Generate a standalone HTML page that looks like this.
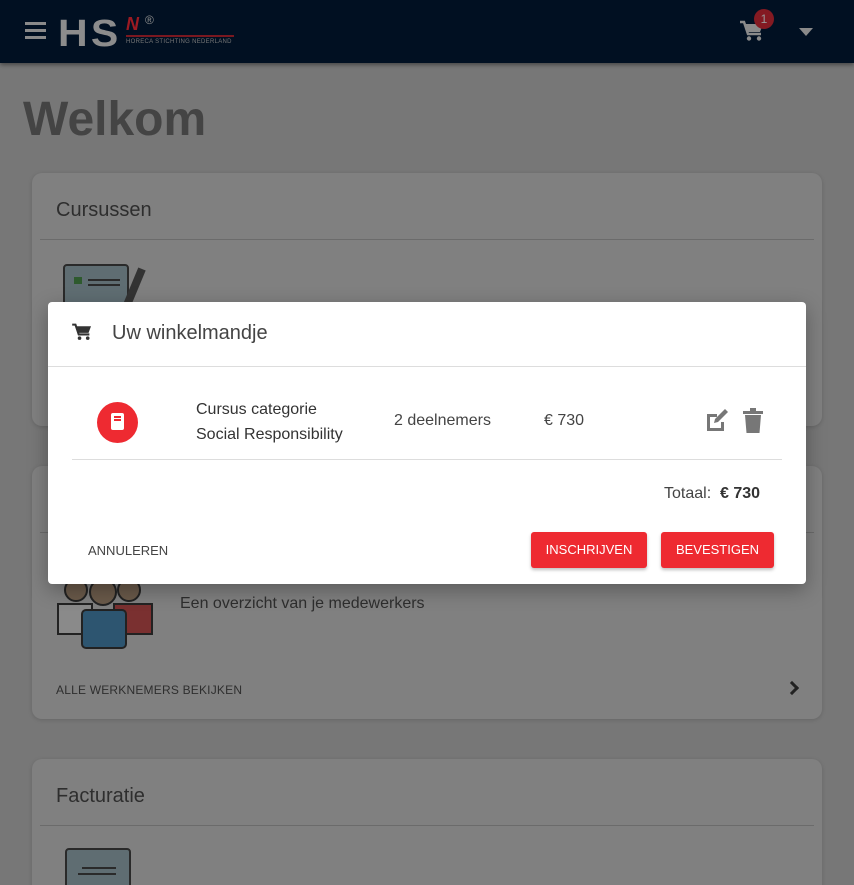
<!DOCTYPE html>
<html><head><meta charset="utf-8"><style>
*{box-sizing:border-box;margin:0;padding:0}
html,body{width:854px;height:885px;overflow:hidden}
body{background:#777;font-family:"Liberation Sans",sans-serif;position:relative;color:#333}
.hdr{position:absolute;left:0;top:0;width:854px;height:63px;background:#011022;box-shadow:0 2px 4px rgba(0,0,0,.4)}
.card{position:absolute;left:32px;width:790px;background:#808080;border-radius:10px;box-shadow:0 1px 4px rgba(0,0,0,.15)}
.card h2{font-weight:normal;font-size:20px;color:#2e2e2e;padding:26px 0 0 16px;height:67px;border-bottom:1px solid #6b6b6b;margin:0 8px}
.modal{position:absolute;left:48px;top:302px;width:758px;height:282px;background:#fff;border-radius:4px;box-shadow:0 6px 20px rgba(0,0,0,.3)}
.btn{position:absolute;top:230px;height:36px;background:#ee2a31;color:#fff;font-size:13px;border-radius:3px;text-align:center;line-height:36px;box-shadow:0 2px 3px rgba(0,0,0,.25)}
</style></head><body>
<div class="hdr">
 <div style="position:absolute;left:25px;top:22px;width:21px;height:3px;background:#8a8a8a;box-shadow:0 7px 0 #8a8a8a,0 14px 0 #8a8a8a"></div>
 <div style="position:absolute;left:58px;top:13px;font:bold 38px 'Liberation Sans';color:#8c8c8c;letter-spacing:3px;line-height:42px;transform:scaleX(1.08);transform-origin:left">HS</div>
 <div style="position:absolute;left:126px;top:14px;font:italic bold 18px 'Liberation Sans';color:#9c1a22">N</div>
 <div style="position:absolute;left:145px;top:13px;font:12px 'Liberation Sans';color:#8c8c8c">®</div>
 <div style="position:absolute;left:126px;top:35px;width:108px;height:2px;background:#7a1820"></div>
 <div style="position:absolute;left:126px;top:39px;font:6px 'Liberation Sans';color:#777;letter-spacing:.3px">HORECA STICHTING NEDERLAND</div>
 <svg style="position:absolute;left:740px;top:20px" width="24" height="22" viewBox="0 0 24 22"><path d="M0 2h4l4 12h13" fill="none" stroke="#8a8a8a" stroke-width="2.5"/><path d="M5 4h18l-3 8H8z" fill="#8a8a8a"/><circle cx="9" cy="18.5" r="2.2" fill="#8a8a8a"/><circle cx="19" cy="18.5" r="2.2" fill="#8a8a8a"/></svg>
 <div style="position:absolute;left:754px;top:9px;width:20px;height:20px;border-radius:50%;background:#841a22;color:#999;font-size:12px;text-align:center;line-height:20px">1</div>
 <div style="position:absolute;left:799px;top:28px;border-left:7px solid transparent;border-right:7px solid transparent;border-top:8px solid #8a8a8a"></div>
</div>
<div style="position:absolute;left:23px;top:92px;font:bold 48px 'Liberation Sans';color:#444">Welkom</div>
<div class="card" style="top:173px;height:253px"><h2>Cursussen</h2>
 <svg style="position:absolute;left:30px;top:84px" width="90" height="60"><rect x="2" y="8" width="64" height="50" rx="3" fill="#5f6d72" stroke="#2a2a2a" stroke-width="2"/><rect x="12" y="20" width="8" height="7" fill="#2e5a2e"/><rect x="26" y="22" width="32" height="2" fill="#2a2a2a"/><rect x="26" y="27" width="32" height="2" fill="#2a2a2a"/><path d="M60 60L80 12" stroke="#333" stroke-width="8"/></svg>
</div>
<div class="card" style="top:466px;height:253px"><h2>Werknemers</h2>
 <svg style="position:absolute;left:22px;top:104px" width="110" height="80"><circle cx="22" cy="20" r="11" fill="#6a5a4a" stroke="#222" stroke-width="2"/><circle cx="75" cy="20" r="11" fill="#6a5a4a" stroke="#222" stroke-width="2"/><rect x="4" y="34" width="34" height="30" fill="#8a8a8a" stroke="#222" stroke-width="2"/><rect x="60" y="34" width="38" height="30" fill="#7a3030" stroke="#222" stroke-width="2"/><circle cx="49" cy="22" r="13" fill="#6a5a4a" stroke="#222" stroke-width="2"/><rect x="28" y="40" width="44" height="38" rx="4" fill="#2d5570" stroke="#222" stroke-width="2"/></svg>
 <div style="position:absolute;left:148px;top:129px;font-size:16px;color:#2e2e2e">Een overzicht van je medewerkers</div>
 <div style="position:absolute;left:24px;top:217px;font-size:12px;color:#2e2e2e;letter-spacing:.2px">ALLE WERKNEMERS BEKIJKEN</div>
 <div style="position:absolute;left:755px;top:217px;width:10px;height:10px;border-right:3px solid #222;border-bottom:3px solid #222;transform:rotate(-45deg)"></div>
</div>
<div class="card" style="top:759px;height:140px"><h2>Facturatie</h2>
 <svg style="position:absolute;left:32px;top:88px" width="90" height="40"><rect x="2" y="2" width="64" height="50" rx="3" fill="#5f6d72" stroke="#2a2a2a" stroke-width="2"/><rect x="18" y="20" width="34" height="2" fill="#2a2a2a"/><rect x="14" y="26" width="38" height="2" fill="#2a2a2a"/></svg>
</div>
<div class="modal">
 <svg style="position:absolute;left:24px;top:21px" width="20" height="18" viewBox="0 0 24 22"><path d="M0 2h4l4 12h13" fill="none" stroke="#333" stroke-width="2.5"/><path d="M5 4h18l-3 8H8z" fill="#333"/><circle cx="9" cy="18.5" r="2.2" fill="#333"/><circle cx="19" cy="18.5" r="2.2" fill="#333"/></svg>
 <div style="position:absolute;left:64px;top:20px;font-size:20px;color:#444">Uw winkelmandje</div>
 <div style="position:absolute;left:0;top:64px;width:758px;height:1px;background:#ddd"></div>
 <div style="position:absolute;left:49px;top:100px;width:41px;height:41px;border-radius:50%;background:#ee2a31"></div>
 <div style="position:absolute;left:63px;top:111px;width:13px;height:17px;background:#fff;border-radius:2px"></div>
 <div style="position:absolute;left:66px;top:114px;width:7px;height:2px;background:#ee2a31;box-shadow:0 3px 0 #ee2a31"></div>
 <div style="position:absolute;left:148px;top:95px;font-size:16px;line-height:25px;color:#333">Cursus categorie<br>Social Responsibility</div>
 <div style="position:absolute;left:346px;top:110px;font-size:16px;color:#444">2 deelnemers</div>
 <div style="position:absolute;left:496px;top:110px;font-size:16px;color:#444">€ 730</div>
 <svg style="position:absolute;left:657px;top:107px" width="26" height="24" viewBox="0 0 26 24"><path d="M2 5h10v3H5v11h11v-6h3v9H2z" fill="#777"/><path d="M9 14l1-4 10-10 3 3-10 10z" fill="#777"/></svg>
 <svg style="position:absolute;left:694px;top:106px" width="22" height="26" viewBox="0 0 22 26"><rect x="1" y="3" width="20" height="3" fill="#777"/><rect x="8" y="0" width="6" height="3" fill="#777"/><path d="M3 7h16l-1.5 18h-13z" fill="#777"/></svg>
 <div style="position:absolute;left:24px;top:157px;width:710px;height:1px;background:#ddd"></div>
 <div style="position:absolute;left:616px;top:183px;font-size:16px;color:#444">Totaal:&nbsp; <b style="color:#333">€ 730</b></div>
 <div style="position:absolute;left:40px;top:241px;font-size:13px;color:#444">ANNULEREN</div>
 <div class="btn" style="left:483px;width:116px">INSCHRIJVEN</div>
 <div class="btn" style="left:613px;width:113px">BEVESTIGEN</div>
</div>
</body></html>
